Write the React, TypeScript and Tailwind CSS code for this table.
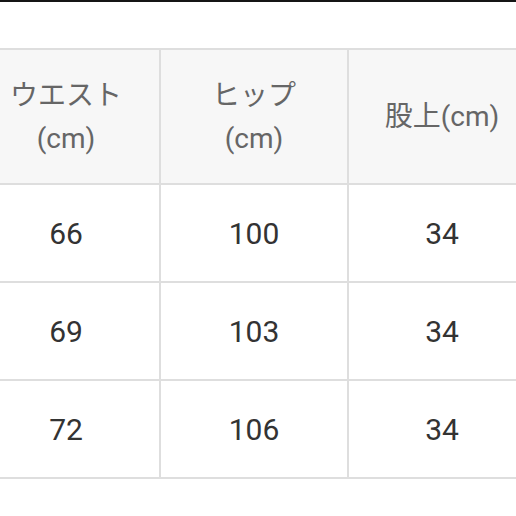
import React from "react";

const headers: string[][] = [["ウエスト", "(cm)"], ["ヒップ", "(cm)"], ["股上(cm)"]];
const rows = [
  ["66", "100", "34"],
  ["69", "103", "34"],
  ["72", "106", "34"],
];

export default function App() {
  return (
    <div
      className="w-[516px] h-[516px] overflow-hidden bg-white"
      style={{ fontFamily: 'Roboto, "Noto Sans CJK JP", sans-serif' }}
    >
      <div className="h-[2px] bg-[#151515]" />
      <div className="h-[46px]" />
      <div className="ml-[-29px] w-[566px] border-t-2 border-l-2 border-[#dedede]">
        <div className="flex">
          {headers.map((h, i) => (
            <div
              key={i}
              className="w-[188px] h-[135px] shrink-0 border-r-2 border-b-2 border-[#dedede] bg-[#f7f7f7] flex flex-col items-center justify-center text-[28px] leading-[43px] text-[#666666]"
            >
              {h.map((l, j) => (
                <div key={j}>{l}</div>
              ))}
            </div>
          ))}
        </div>
        {rows.map((r, i) => (
          <div key={i} className="flex">
            {r.map((c, j) => (
              <div
                key={j}
                className="w-[188px] h-[98px] shrink-0 border-r-2 border-b-2 border-[#dedede] bg-white flex items-center justify-center text-[30px] text-[#333333]"
              >
                {c}
              </div>
            ))}
          </div>
        ))}
      </div>
    </div>
  );
}
